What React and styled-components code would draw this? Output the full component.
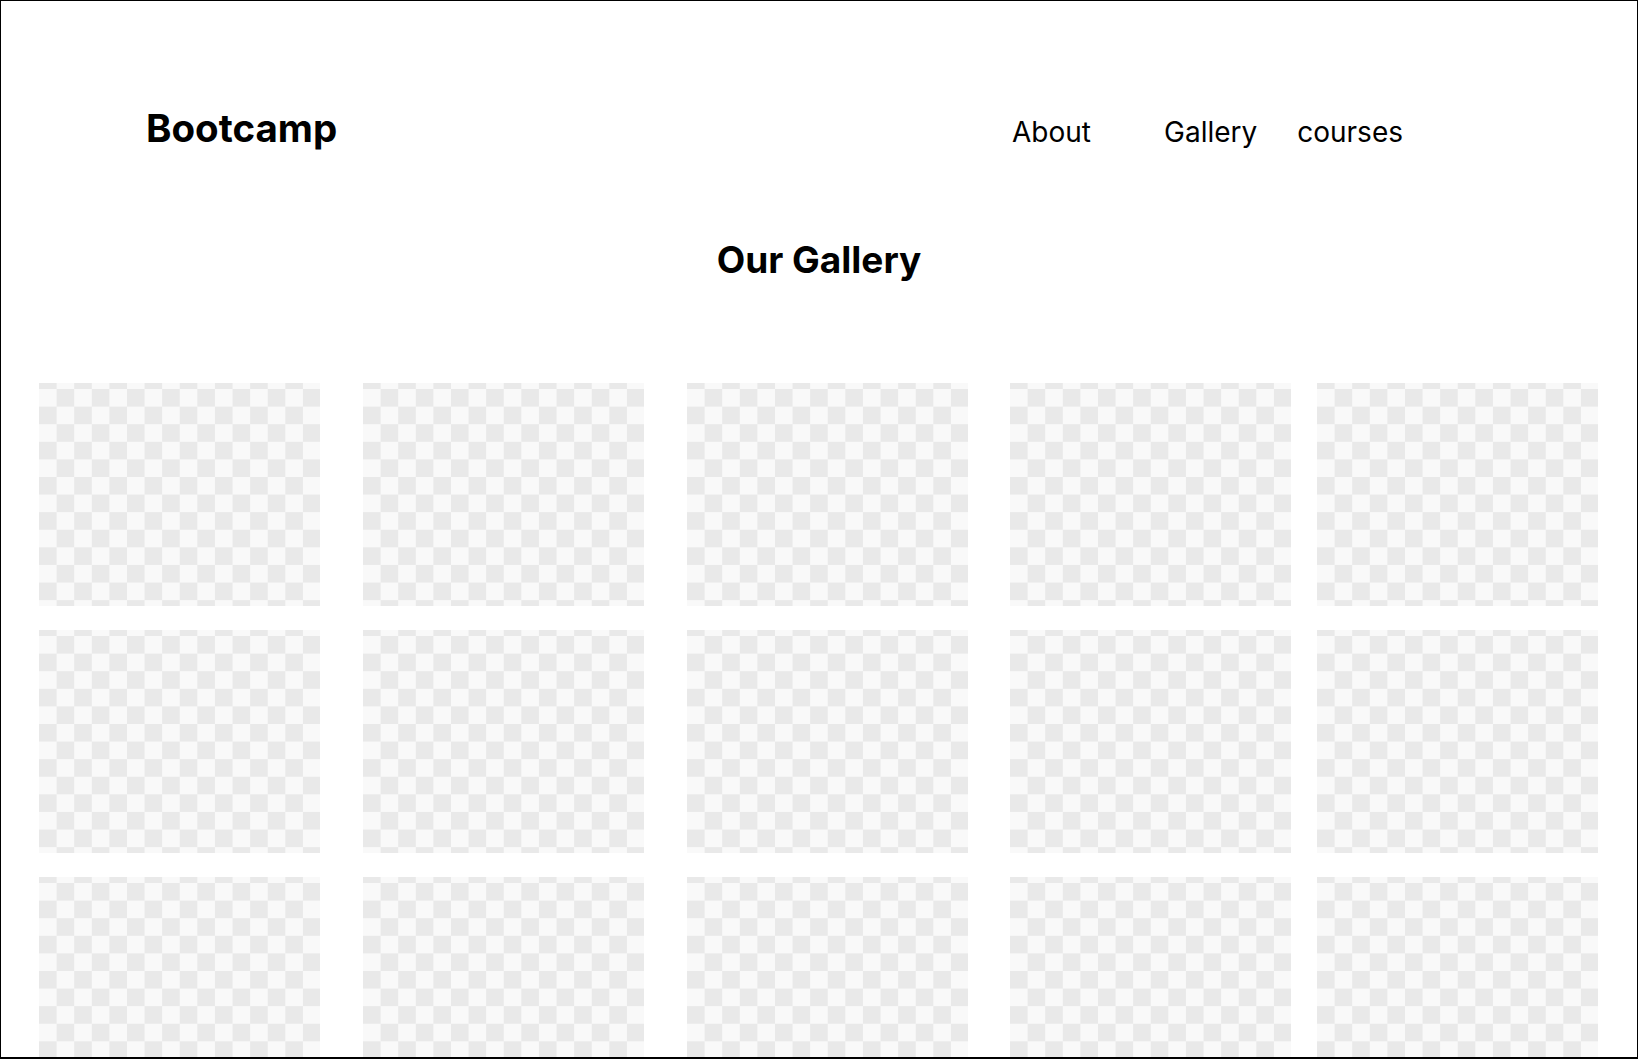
import React from 'react';
import styled, { createGlobalStyle } from 'styled-components';

const GlobalStyle = createGlobalStyle`
  html, body {
    margin: 0;
    padding: 0;
    background: #fff;
  }
  body {
    font-family: Inter, "Noto Sans", "Liberation Sans", sans-serif;
    color: #000;
  }
`;

const Frame = styled.div`
  box-sizing: border-box;
  width: 1638px;
  height: 1059px;
  border: 1px solid #000;
  border-bottom-width: 2px;
  overflow: hidden;
  background: #fff;
`;

const Header = styled.header`
  display: flex;
  align-items: baseline;
  justify-content: space-between;
  padding: 105px 234px 0 145px;
`;

const Logo = styled.div`
  font-size: 38.5px;
  line-height: 44px;
  font-weight: 700;
`;

const Nav = styled.nav`
  display: flex;
  align-items: baseline;
  gap: 40px;
`;

const NavLink = styled.a`
  font-size: 28px;
  font-weight: 400;
  color: #000;
  text-decoration: none;
  margin-right: ${(p) => (p.$spaced ? '33px' : '0')};
  cursor: pointer;
`;

const Title = styled.h1`
  margin: 88px 0 0;
  text-align: center;
  font-size: 37px;
  line-height: 44px;
  font-weight: 700;
`;

const Grid = styled.div`
  display: grid;
  grid-template-columns: repeat(5, 281px);
  column-gap: 42.75px;
  row-gap: 24px;
  padding: 0 0 0 38px;
  margin-top: 101px;
`;

const Tile = styled.div`
  width: 281px;
  height: 223px;
  margin-left: ${(p) => (p.$shift ? '-17px' : '0')};
  background-color: #f9f9f9;
  background-image: repeating-conic-gradient(#f9f9f9 0 25%, #e9e9e9 0 50%);
  background-size: 35.2px 35.2px;
  background-position: 0 -11.6px;
`;

const navItems = ['About', 'Gallery', 'courses'];

export default function App() {
  const tiles = Array.from({ length: 15 }, (_, i) => i);

  return (
    <>
      <GlobalStyle />
      <Frame>
        <Header>
          <Logo>Bootcamp</Logo>
          <Nav>
            {navItems.map((item, i) => (
              <NavLink key={item} $spaced={i === 0}>
                {item}
              </NavLink>
            ))}
          </Nav>
        </Header>
        <Title>Our Gallery</Title>
        <Grid>
          {tiles.map((i) => (
            <Tile key={i} $shift={i % 5 === 4} />
          ))}
        </Grid>
      </Frame>
    </>
  );
}
